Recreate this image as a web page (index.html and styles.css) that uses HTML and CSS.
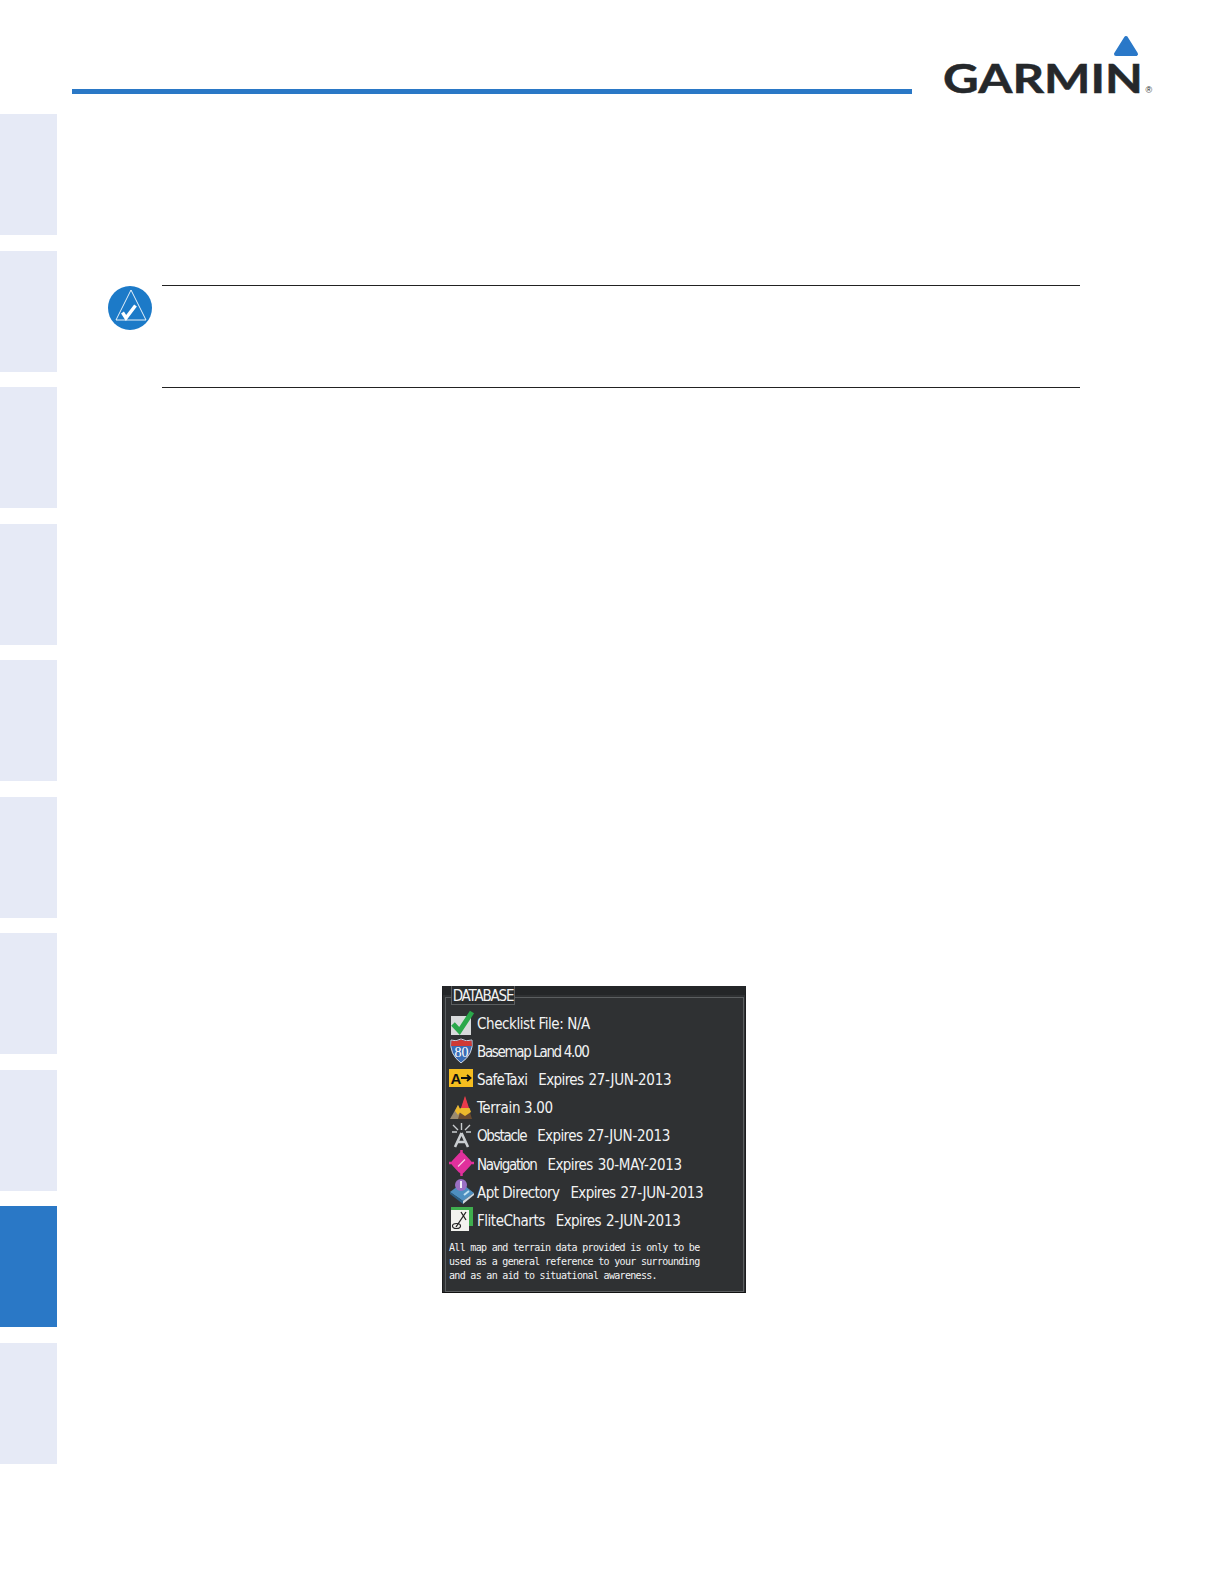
FILE: index.html
```html
<!DOCTYPE html>
<html lang="en">
<head>
<meta charset="utf-8">
<title>Database</title>
<link rel="stylesheet" href="styles.css">
</head>
<body>
<div class="page">
  <nav class="tabs">
    <div class="tab"></div><div class="tab"></div><div class="tab"></div>
    <div class="tab"></div><div class="tab"></div><div class="tab"></div>
    <div class="tab"></div><div class="tab"></div>
    <div class="tab active"></div><div class="tab"></div>
  </nav>
  <main class="main">
    <header class="header">
      <div class="rule"></div>
      <svg class="logo" viewBox="0 0 212 60" width="212" height="60">
        <path d="M184 2 L194 18 H174 Z" fill="#2a78c8" stroke="#2a78c8" stroke-width="4" stroke-linejoin="round"/>
        <text class="logo-text" x="1" y="57" textLength="200" lengthAdjust="spacingAndGlyphs">GARMIN</text>
        <text class="logo-reg" x="203.500" y="57">®</text>
      </svg>
    </header>
    <section class="note">
      <svg class="note-icon" viewBox="0 0 44 44" width="44" height="44">
        <circle cx="22" cy="22" r="22" fill="#1c7ac8"/>
        <path d="M23 4 L38 34 H8 Z" fill="none" stroke="#fff" stroke-width="0.9"/>
        <path d="M14.5 26.5 L18 32 L27.5 19.5" fill="none" stroke="#fff" stroke-width="3.4"/>
      </svg>
      <div class="note-body"></div>
    </section>
    <figure class="screen">
      <div class="group">
        <div class="group-title">DATABASE</div>
        <ul class="rows">
          <li class="row">
            <svg class="ico" viewBox="0 0 26 26"><rect x="2" y="6" width="20" height="19" fill="#d8dadb"/><path d="M4 14 L10.500 21 L23 2" fill="none" stroke="#2aa84a" stroke-width="5"/></svg>
            <span class="name n-checklist">Checklist File: N/A</span>
          </li>
          <li class="row">
            <svg class="ico" viewBox="0 0 26 26"><path d="M2 2 Q7 4 12 1 Q17 4 23 2 Q25 16 12 25 Q0 16 2 2 Z" fill="#3a6cb4" stroke="#cfd6e2" stroke-width="1"/><path d="M2.5 2.5 Q7 4 12 1.500 Q17 4 22.500 2.500 L23 8 H2 Z" fill="#cf3a34"/><text class="ico-num" x="12.500" y="18.500" text-anchor="middle">80</text></svg>
            <span class="name n-basemap">Basemap Land 4.00</span>
          </li>
          <li class="row">
            <svg class="ico" viewBox="0 0 26 26"><rect x="0" y="3" width="24" height="18" fill="#f5bd1f"/><text class="ico-a" x="1.500" y="17.500">A</text><path d="M12 12 H21 M18 9 L21.500 12 L18 15" fill="none" stroke="#111" stroke-width="1.800"/></svg>
            <span class="name n-taxi">SafeTaxi</span><span class="exp">Expires</span><span class="date">27-JUN-2013</span>
          </li>
          <li class="row">
            <svg class="ico" viewBox="0 0 26 26"><path d="M1 25 L9 11 L15 25 Z" fill="#9a8a70"/><path d="M6 17 L9 11 L12 17 L9 21 Z" fill="#edb92c"/><path d="M9 25 L16 2 L23 25 Z" fill="#6a4a30"/><path d="M12 14 L16 2 L20 14 Z" fill="#ea3a4c"/><path d="M11.500 14 H20.500 L22 18 L16 22 L10 18 Z" fill="#edb92c"/></svg>
            <span class="name n-terrain">Terrain 3.00</span>
          </li>
          <li class="row">
            <svg class="ico" viewBox="0 0 26 26"><path d="M12.500 11 L6 25 M12.500 11 L19 25 M8 20 H17" fill="none" stroke="#c9cdd0" stroke-width="2.600"/><path d="M12.500 1 V8 M4 3 L9 8 M21 3 L16 8 M3 10 H8 M22 10 H17" stroke="#c9cdd0" stroke-width="1.400"/></svg>
            <span class="name n-obstacle">Obstacle</span><span class="exp">Expires</span><span class="date">27-JUN-2013</span>
          </li>
          <li class="row">
            <svg class="ico" viewBox="0 0 26 26"><path d="M12.500 6 L19 13 L12.500 20 L6 13 Z" fill="#e0309c" stroke="#e0309c" stroke-width="7" stroke-linejoin="round"/><path d="M12.500 0 V26 M0 13 H25" stroke="#e0309c" stroke-width="2.500"/><path d="M9 16.500 L16 9.500" stroke="#f6d0e6" stroke-width="1.200"/></svg>
            <span class="name n-nav">Navigation</span><span class="exp">Expires</span><span class="date">30-MAY-2013</span>
          </li>
          <li class="row">
            <svg class="ico" viewBox="0 0 26 26"><path d="M1 14 L9 8 L16 8 L25 15 L14 23 Z" fill="#4e8fc0"/><path d="M1 14 L14 23 V26 L1 16 Z" fill="#2b5f86"/><path d="M14 23 L25 15 V17 L14 26 Z" fill="#cfd8de"/><circle cx="12" cy="7" r="6" fill="#9a70c4"/><rect x="11" y="3" width="2" height="7" fill="#f2eef8"/><path d="M15 17 L20 13" stroke="#bfe0f0" stroke-width="2"/></svg>
            <span class="name n-apt">Apt Directory</span><span class="exp">Expires</span><span class="date">27-JUN-2013</span>
          </li>
          <li class="row">
            <svg class="ico" viewBox="0 0 26 26"><rect x="2" y="4" width="18" height="21" fill="#f2f2ee"/><path d="M2 1 H24 V20 H20 V4 H2 Z" fill="#3fae4e"/><path d="M17 6 L7 21 M12 6 L17 14" fill="none" stroke="#222" stroke-width="1.300"/><ellipse cx="7.500" cy="20" rx="4" ry="2.500" fill="none" stroke="#222" stroke-width="1.200"/></svg>
            <span class="name n-flite">FliteCharts</span><span class="exp">Expires</span><span class="date">2-JUN-2013</span>
          </li>
        </ul>
        <p class="disclaimer">All map and terrain data provided is only to be<br>used as a general reference to your surrounding<br>and as an aid to situational awareness.</p>
      </div>
    </figure>
  </main>
</div>
</body>
</html>
```
FILE: styles.css
```css
* { box-sizing: border-box; }
html, body { margin: 0; padding: 0; background: #fff; }
.page {
  width: 1224px;
  height: 1584px;
  display: flex;
  overflow: hidden;
}
.tabs {
  width: 57px;
  flex: none;
  padding-top: 114px;
  display: flex;
  flex-direction: column;
  gap: 15.5px;
}
.tab { height: 121px; background: #e6eaf6; }
.tab.active { background: #2a78c6; }
.main { flex: 1; padding-left: 14px; min-width: 0; }
.header { display: flex; align-items: flex-end; height: 96px; }
.rule { width: 840px; height: 5px; margin: 0 0 2px 1px; background: #2a78c6; }
.logo { margin-left: 30px; flex: none; display: block; overflow: visible; }
.logo-text {
  font-family: "Lato", "Liberation Sans", sans-serif;
  font-weight: 700;
  font-size: 41px;
  fill: #25282b;
  stroke: #25282b;
  stroke-width: 0.5px;
}
.logo-reg { font-family: "Liberation Sans", sans-serif; font-size: 9px; fill: #25282b; }
.note { display: flex; margin-top: 189px; margin-left: 37px; }
.note-icon { flex: none; margin-top: 1px; display: block; }
.note-body {
  margin-left: 10px;
  width: 918px;
  height: 103px;
  border-top: 1px solid #222;
  border-bottom: 1px solid #222;
}
.screen {
  margin: 598px 0 0 371px;
  width: 304px;
  height: 307px;
  background: #2f3133;
  border-top: 9px solid #242628;
  border-left: 1px solid #1c1d1f;
  border-right: 1px solid #1c1d1f;
  border-bottom: 1px solid #111;
  padding: 2px 1px 0 2px;
  color: #f2f3f3;
  font-family: "DejaVu Sans Condensed", "DejaVu Sans", sans-serif;
}
.group {
  position: relative;
  height: 295px;
  border: 1px solid #5b5e60;
  padding: 12px 0 0 3px;
}
.group-title {
  position: absolute;
  left: 5px;
  top: -12px;
  width: 64px;
  height: 19px;
  text-align: center;
  background: #2a2c2e;
  border: 1px solid #5b5e60;
  border-top: 0;
  font-size: 15px;
  line-height: 20px;
  letter-spacing: -1.17px;
  white-space: nowrap;
}
.rows { list-style: none; margin: 0; padding: 0; }
.row {
  height: 28.1px;
  display: flex;
  align-items: center;
  font-size: 15px;
  line-height: 20px;
  white-space: nowrap;
}
.name { margin-left: 2px; }
.n-checklist { letter-spacing: -0.42px; }
.n-basemap { letter-spacing: -1.35px; }
.n-taxi { letter-spacing: -0.67px; }
.n-terrain { letter-spacing: -0.32px; }
.n-obstacle { letter-spacing: -1.26px; }
.n-nav { letter-spacing: -1.33px; }
.n-apt { letter-spacing: -0.55px; }
.n-flite { letter-spacing: -0.47px; }
.exp { margin-left: 11px; letter-spacing: -0.6px; }
.date { margin-left: 5px; letter-spacing: -0.3px; }
.ico { width: 26px; height: 26px; flex: none; display: block; margin-top: -3px; }
.ico-num { font-family: "Liberation Serif", serif; font-size: 14px; fill: #fff; }
.ico-a { font-family: "Liberation Sans", sans-serif; font-size: 15px; font-weight: 700; fill: #111; }
.disclaimer {
  margin: 6px 0 0 0;
  font-family: "DejaVu Sans Mono", monospace;
  font-size: 10px;
  line-height: 14px;
  letter-spacing: -0.69px;
  white-space: nowrap;
}
```
